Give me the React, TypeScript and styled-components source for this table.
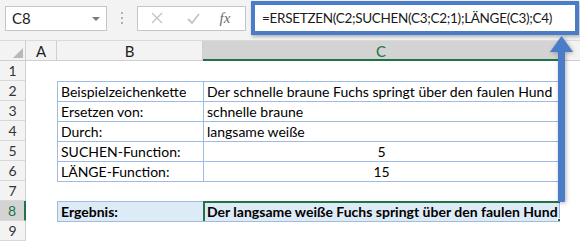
import React from "react";
import styled, { createGlobalStyle } from "styled-components";

const Global = createGlobalStyle`
  html, body { margin: 0; padding: 0; background: #fff; }
  body { width: 580px; height: 241px; overflow: hidden; font-family: "Lato", "Liberation Sans", sans-serif; }
`;

const Page = styled.div`
  position: relative;
  width: 580px;
  height: 241px;
  overflow: hidden;
  background: #fff;
`;

const Toolbar = styled.div`
  display: flex;
  align-items: center;
  height: 41px;
  padding: 0 1px 4px 5px;
  box-sizing: border-box;
  background: #f3f3f3;
  border-bottom: 1px solid #dadada;
`;

const NameBox = styled.div`
  position: relative;
  flex: 0 0 102px;
  height: 25px;
  box-sizing: border-box;
  background: #fff;
  border: 1px solid #c6c6c6;
  display: flex;
  align-items: center;
  padding-left: 6px;
  font-size: 15px;
  color: #222;
`;

const DropTri = styled.span`
  position: absolute;
  right: 6px;
  top: 10px;
  width: 0;
  height: 0;
  border-left: 4px solid transparent;
  border-right: 4px solid transparent;
  border-top: 4px solid #7a7a7a;
`;

const Dots = styled.div`
  flex: 0 0 30px;
  display: flex;
  flex-direction: column;
  align-items: center;
  gap: 3px;
  & > span { width: 2px; height: 2px; background: #b0b0b0; }
`;

const FxBox = styled.div`
  flex: 0 0 109px;
  height: 25px;
  box-sizing: border-box;
  background: #fff;
  border: 1px solid #c6c6c6;
  display: grid;
  grid-template-columns: 36px 36px 1fr;
  align-items: center;
  justify-items: center;
  padding-left: 1px;
`;

const Fx = styled.span`
  font-family: "Liberation Serif", serif;
  font-style: italic;
  font-size: 15px;
  color: #6b6b6b;
  margin-right: 6px;
`;

const FormulaWrap = styled.div`
  margin-left: 5px;
  flex: 1 1 auto;
  min-width: 0;
  overflow: hidden;
  height: 34px;
  box-sizing: border-box;
  border: 4px solid #4a7cca;
  background: #fff;
  box-shadow: 1px 2px 3px rgba(0, 0, 0, 0.25);
  display: flex;
  align-items: center;
  padding-left: 7px;
  font-size: 13.5px;
  letter-spacing: -0.3px;
  color: #1a1a1a;
  white-space: nowrap;
`;

const Sheet = styled.div`
  display: grid;
  grid-template-columns: 26px 31px 146px 357px 1fr;
  grid-template-rows: 20px;
  grid-auto-rows: 20px;
`;

const Corner = styled.div`
  position: relative;
  background: #f3f3f3;
  border-right: 1px solid #cfcfcf;
  border-bottom: 1px solid #cfcfcf;
  box-sizing: border-box;
  &::after {
    content: "";
    position: absolute;
    right: 2px;
    bottom: 2px;
    width: 0;
    height: 0;
    border-left: 10px solid transparent;
    border-bottom: 10px solid #b8b8b8;
  }
`;

const ColHead = styled.div<{ $sel?: boolean; $noRight?: boolean }>`
  box-sizing: border-box;
  background: ${(p) => (p.$sel ? "#d3d3d3" : "#f3f3f3")};
  border-right: ${(p) => (p.$noRight ? "none" : "1px solid #cfcfcf")};
  border-bottom: ${(p) => (p.$sel ? "2px solid #217346" : "1px solid #cfcfcf")};
  display: flex;
  align-items: center;
  justify-content: center;
  font-size: 15px;
  color: ${(p) => (p.$sel ? "#217346" : "#222")};
  padding-top: ${(p) => (p.$sel ? "1px" : "0")};
`;

const RowHead = styled.div<{ $sel?: boolean }>`
  box-sizing: border-box;
  background: ${(p) => (p.$sel ? "#d3d3d3" : "#f3f3f3")};
  border-right: ${(p) => (p.$sel ? "2px solid #217346" : "1px solid #cfcfcf")};
  border-bottom: 1px solid #d8d8d8;
  display: flex;
  align-items: center;
  justify-content: center;
  font-size: 14px;
  color: ${(p) => (p.$sel ? "#217346" : "#333")};
`;

const LINE = "#9dbbe3";

const Cell = styled.div<{
  $top?: boolean;
  $left?: boolean;
  $right?: boolean;
  $fill?: boolean;
  $bold?: boolean;
  $center?: boolean;
}>`
  position: relative;
  box-sizing: border-box;
  background: ${(p) => (p.$fill ? "#ddebf7" : "#fff")};
  border-top: ${(p) => (p.$top ? `1px solid ${LINE}` : "none")};
  border-left: ${(p) => (p.$left ? `1px solid ${LINE}` : "none")};
  border-right: ${(p) => (p.$right ? `1px solid ${LINE}` : "none")};
  display: flex;
  align-items: center;
  justify-content: ${(p) => (p.$center ? "center" : "flex-start")};
  padding-left: ${(p) => (p.$center ? "0" : "3px")};
  font-size: 14px;
  font-weight: ${(p) => (p.$bold ? 700 : 400)};
  color: #000;
  white-space: nowrap;
`;

const Selection = styled.div`
  position: absolute;
  left: -1px;
  top: -1px;
  right: -3px;
  bottom: -2px;
  border: 2px solid #217346;
  pointer-events: none;
  &::after {
    content: "";
    position: absolute;
    right: -4px;
    bottom: -4px;
    width: 5px;
    height: 5px;
    background: #217346;
    border: 1px solid #fff;
  }
`;

const Arrow = styled.svg`
  position: absolute;
  left: 549px;
  top: 36px;
  filter: drop-shadow(1px 1px 2px rgba(0, 0, 0, 0.3));
`;

type RowDef = {
  n: number;
  b?: string;
  c?: string;
  boxed?: boolean;
  topOnly?: boolean;
  center?: boolean;
  result?: boolean;
};

const rows: RowDef[] = [
  { n: 1 },
  { n: 2, b: "Beispielzeichenkette", c: "Der schnelle braune Fuchs springt über den faulen Hund", boxed: true },
  { n: 3, b: "Ersetzen von:", c: "schnelle braune", boxed: true },
  { n: 4, b: "Durch:", c: "langsame weiße", boxed: true },
  { n: 5, b: "SUCHEN-Function:", c: "5", boxed: true, center: true },
  { n: 6, b: "LÄNGE-Function:", c: "15", boxed: true, center: true },
  { n: 7, topOnly: true },
  { n: 8, b: "Ergebnis:", c: "Der langsame weiße Fuchs springt über den faulen Hund", result: true },
  { n: 9, topOnly: true },
];

export default function App() {
  return (
    <Page>
      <Global />
      <Toolbar>
        <NameBox>
          C8
          <DropTri />
        </NameBox>
        <Dots>
          <span />
          <span />
          <span />
        </Dots>
        <FxBox>
          <svg width="12" height="12" viewBox="0 0 12 12">
            <path d="M1 1 L11 11 M11 1 L1 11" stroke="#c4c4c4" strokeWidth="1.4" fill="none" />
          </svg>
          <svg width="13" height="11" viewBox="0 0 13 11">
            <path d="M1 6 L5 10 L12 1" stroke="#c4c4c4" strokeWidth="1.8" fill="none" />
          </svg>
          <Fx>fx</Fx>
        </FxBox>
        <FormulaWrap>=ERSETZEN(C2;SUCHEN(C3;C2;1);LÄNGE(C3);C4)</FormulaWrap>
      </Toolbar>
      <Sheet>
        <Corner />
        <ColHead>A</ColHead>
        <ColHead>B</ColHead>
        <ColHead $sel>C</ColHead>
        <ColHead $noRight />
        {rows.map((r) => {
          const boxed = !!r.boxed || !!r.result;
          const top = boxed || !!r.topOnly;
          return (
            <React.Fragment key={r.n}>
              <RowHead $sel={r.result}>{r.n}</RowHead>
              <Cell />
              <Cell $top={top} $left={boxed} $fill={r.result} $bold={r.result}>
                {r.b}
              </Cell>
              <Cell
                $top={top}
                $left={boxed}
                $right={boxed}
                $fill={r.result}
                $bold={r.result}
                $center={r.center}
              >
                {r.c}
                {r.result && <Selection />}
              </Cell>
              <Cell />
            </React.Fragment>
          );
        })}
      </Sheet>
      <Arrow width="26" height="168" viewBox="0 0 26 168">
        <polygon points="12.5,0 24,16 1,16" fill="#4a7cca" />
        <rect x="9" y="15" width="7" height="151" rx="1" fill="#4a7cca" />
      </Arrow>
    </Page>
  );
}
